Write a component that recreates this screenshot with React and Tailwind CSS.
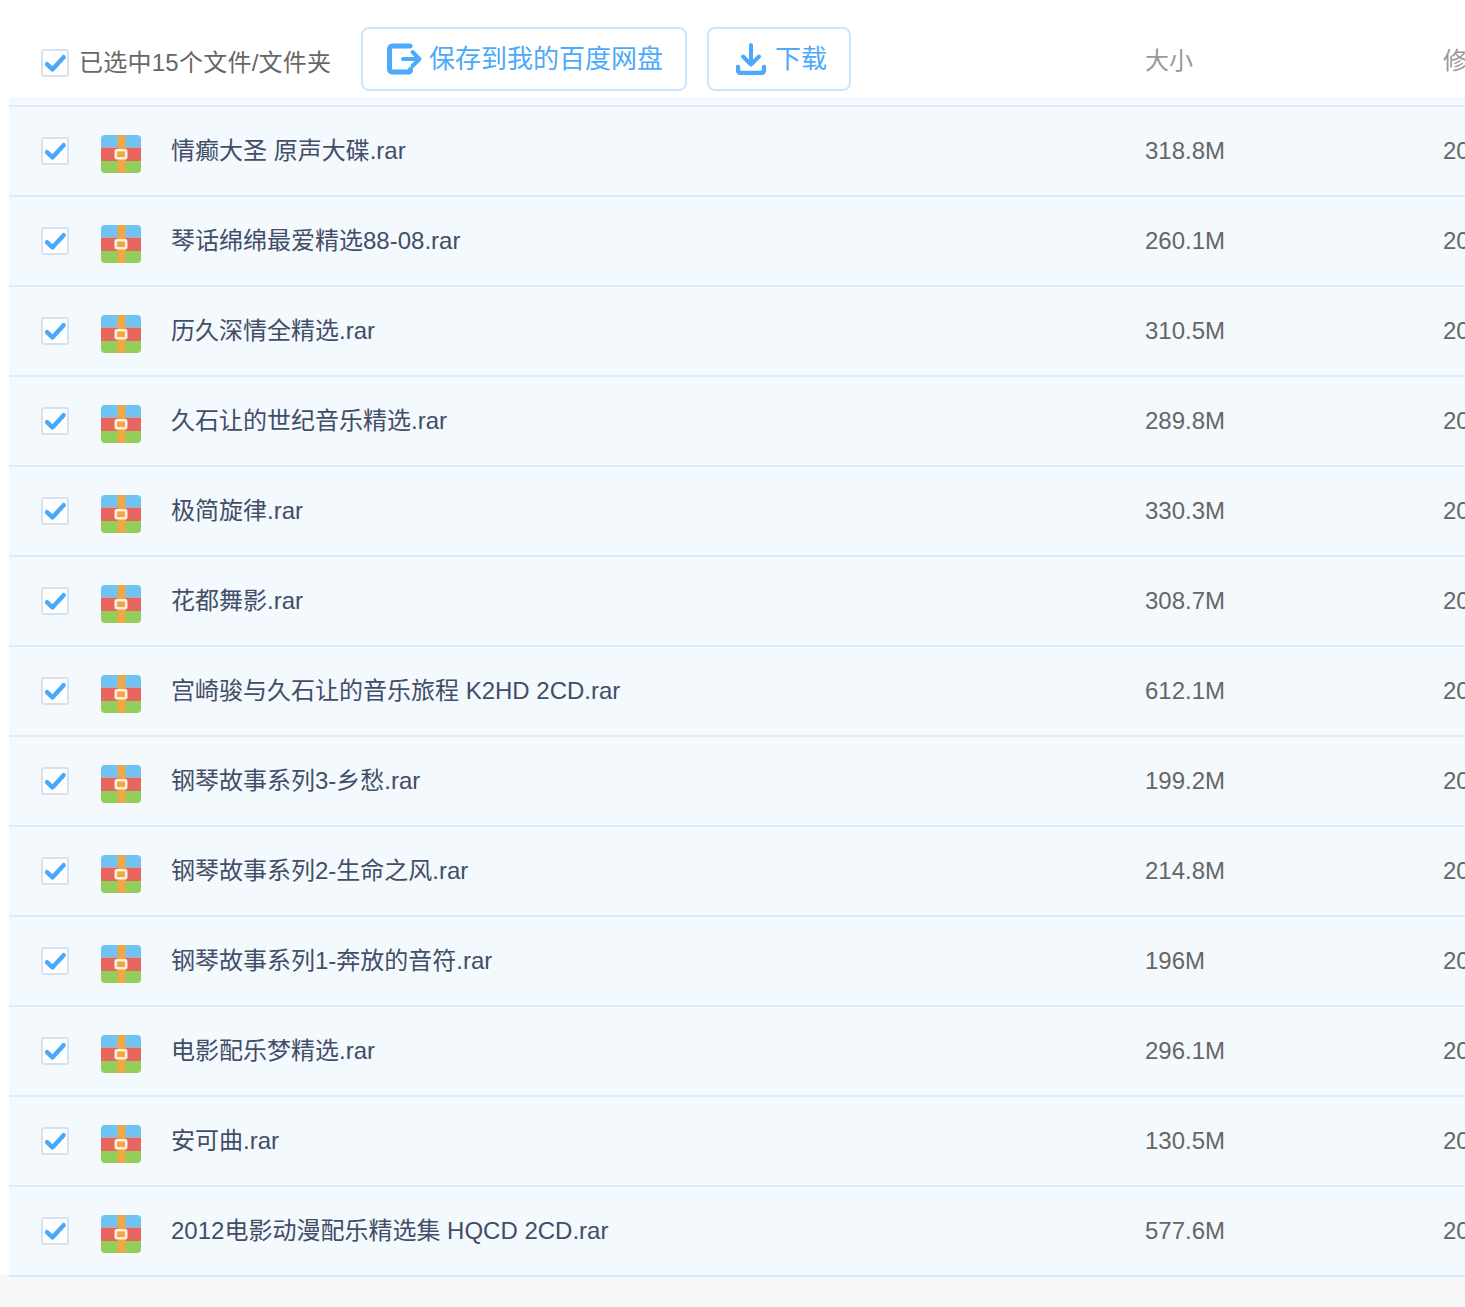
const files = [
  ["情癫大圣 原声大碟.rar", "318.8M"],
  ["琴话绵绵最爱精选88-08.rar", "260.1M"],
  ["历久深情全精选.rar", "310.5M"],
  ["久石让的世纪音乐精选.rar", "289.8M"],
  ["极简旋律.rar", "330.3M"],
  ["花都舞影.rar", "308.7M"],
  ["宫崎骏与久石让的音乐旅程 K2HD 2CD.rar", "612.1M"],
  ["钢琴故事系列3-乡愁.rar", "199.2M"],
  ["钢琴故事系列2-生命之风.rar", "214.8M"],
  ["钢琴故事系列1-奔放的音符.rar", "196M"],
  ["电影配乐梦精选.rar", "296.1M"],
  ["安可曲.rar", "130.5M"],
  ["2012电影动漫配乐精选集 HQCD 2CD.rar", "577.6M"],
];

function Check() {
  return (
    <div className="w-[28px] h-[28px] shrink-0 rounded-[3px] border-2 border-[#dbe1ec] bg-[#fdfeff]">
      <svg viewBox="0 0 28 28" className="w-[28px] h-[28px] -m-[2px]">
        <path d="M6 15.2 L11.4 20.4 L22.6 8.2" fill="none" stroke="#4aa8fb" strokeWidth="4.4" strokeLinecap="round" strokeLinejoin="round" />
      </svg>
    </div>
  );
}

function RarIcon() {
  return (
    <svg viewBox="0 0 40 38" className="w-[40px] h-[38px] shrink-0">
      <defs>
        <clipPath id="rar-clip"><rect x="0" y="0" width="40" height="38" rx="4" /></clipPath>
      </defs>
      <g clipPath="url(#rar-clip)">
        <rect x="0" y="0" width="40" height="12.5" fill="#70c4f3" />
        <rect x="0" y="12.5" width="40" height="13.5" fill="#e7675f" />
        <rect x="0" y="26" width="40" height="12" fill="#92cf5a" />
        <rect x="16.5" y="0" width="8" height="38" fill="#f0a844" />
        <rect x="14.8" y="15.3" width="10.4" height="8" rx="1" fill="#f0a844" stroke="#fdeee0" strokeWidth="2.6" />
      </g>
    </svg>
  );
}

function SaveIcon() {
  return (
    <svg viewBox="0 0 36 32" className="w-[36px] h-[32px] shrink-0">
      <path d="M23 3 H6 Q2.5 3 2.5 6.5 V25.5 Q2.5 29 6 29 H21.5 Q23.5 29 23.5 26.5" fill="none" stroke="#4da9fa" strokeWidth="5" strokeLinecap="round" />
      <path d="M16 16 H32 M25.5 9 L32.5 16 L25.5 23" fill="none" stroke="#4da9fa" strokeWidth="4" strokeLinecap="round" strokeLinejoin="round" />
    </svg>
  );
}

function DownloadIcon() {
  return (
    <svg viewBox="0 0 30 32" className="w-[30px] h-[32px] shrink-0">
      <path d="M15 2 V20 M7 13.5 L15 21.5 L23 13.5" fill="none" stroke="#4da9fa" strokeWidth="4" strokeLinecap="round" strokeLinejoin="round" />
      <path d="M2 24 V27 Q2 30 5 30 H25 Q28 30 28 27 V24" fill="none" stroke="#4da9fa" strokeWidth="4.4" strokeLinecap="round" />
    </svg>
  );
}

export default function App() {
  return (
    <div className="w-[1465px] h-[1307px] overflow-hidden bg-white flex flex-col font-['Liberation_Sans','Noto_Sans_CJK_SC',sans-serif] text-[24px]">
      <div className="h-[97px] shrink-0 bg-white flex items-start pl-[41px]">
        <div className="mt-[49px]"><Check /></div>
        <div className="ml-[10px] mt-[48px] w-[252px] shrink-0 h-[30px] leading-[30px] tracking-[0.25px] text-[#666666] whitespace-nowrap">已选中15个文件/文件夹</div>
        <button className="ml-[30px] mt-[27px] w-[326px] shrink-0 h-[64px] rounded-[8px] border-2 border-[#c9e6fc] bg-white flex items-center pl-[24px] gap-[6px] text-[26px] text-[#4da9fa] whitespace-nowrap">
          <SaveIcon />
          <span>保存到我的百度网盘</span>
        </button>
        <button className="ml-[20px] mt-[27px] w-[144px] shrink-0 h-[64px] rounded-[8px] border-2 border-[#c9e6fc] bg-white flex items-center pl-[27px] gap-[9px] text-[26px] text-[#4da9fa] whitespace-nowrap">
          <DownloadIcon />
          <span>下载</span>
        </button>
        <div className="ml-[294px] mt-[46px] w-[298px] shrink-0 h-[30px] leading-[30px] text-[#999999]">大小</div>
        <div className="mt-[46px] h-[30px] shrink-0 leading-[30px] text-[#999999]">修</div>
      </div>
      <div className="ml-[9px] shrink-0 bg-[#f4f9fe] relative">
        <div className="h-[10px] border-b-2 border-[#dceafa]" />
        {files.map(([name, size]) => (
          <div key={name} className="h-[90px] border-b-2 border-[#dceafa] last:border-[#d3e9fd] flex items-center pl-[32px]">
            <Check />
            <div className="ml-[32px] mt-[6px]"><RarIcon /></div>
            <div className="ml-[30px] w-[974px] shrink-0 text-[#424e67] whitespace-nowrap">{name}</div>
            <div className="w-[298px] shrink-0 text-[#666666]">{size}</div>
            <div className="shrink-0 text-[#666666]">20</div>
          </div>
        ))}
      </div>
      <div className="flex-1 -mt-[2px] bg-[#f7f7f7]" />
    </div>
  );
}
